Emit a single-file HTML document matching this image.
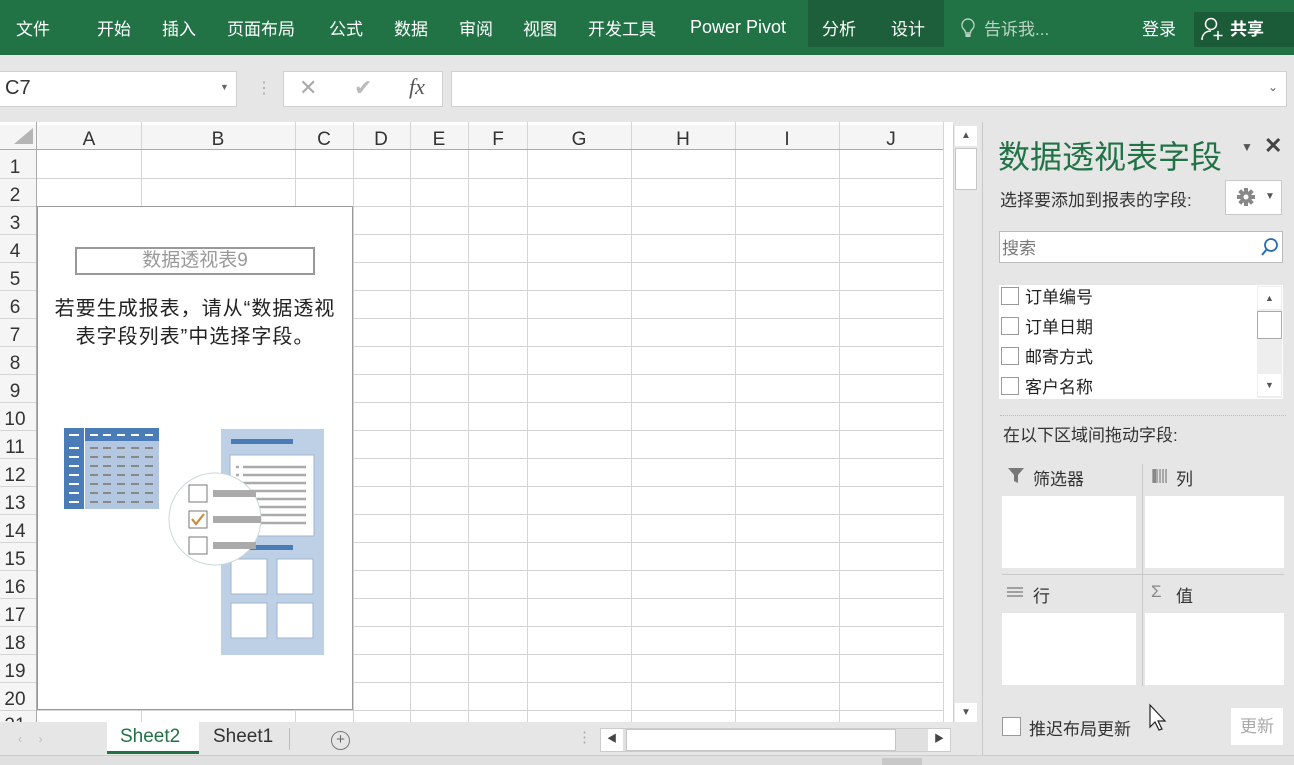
<!DOCTYPE html>
<html><head><meta charset="utf-8"><style>
*{margin:0;padding:0;box-sizing:border-box}
body{width:1294px;height:765px;overflow:hidden;background:#e6e6e6;font-family:"Liberation Sans","Noto Sans CJK SC",sans-serif;position:relative;color:#222}
.a{position:absolute}
.tab{position:absolute;top:15px;color:#fff;font-size:17px;white-space:nowrap}
</style></head><body>
<!-- ribbon -->
<div class="a" style="left:0;top:0;width:1294px;height:55px;background:#217346"></div>
<div class="a" style="left:808px;top:0;width:136px;height:47px;background:#1d5f3a"></div>
<div class="a" style="left:1194px;top:12px;width:100px;height:35px;background:#1b5b37"></div>
<span class="tab" style="left:16px">文件</span>
<span class="tab" style="left:97px">开始</span>
<span class="tab" style="left:162px">插入</span>
<span class="tab" style="left:227px">页面布局</span>
<span class="tab" style="left:329px">公式</span>
<span class="tab" style="left:394px">数据</span>
<span class="tab" style="left:459px">审阅</span>
<span class="tab" style="left:523px">视图</span>
<span class="tab" style="left:588px">开发工具</span>
<span class="tab" style="left:690px;top:17px;font-size:18px">Power Pivot</span>
<span class="tab" style="left:822px">分析</span>
<span class="tab" style="left:891px">设计</span>
<svg class="a" style="left:960px;top:18px" width="16" height="22" viewBox="0 0 16 22"><path d="M8 1a6 6 0 0 0-4 10.5c1 1 1.5 2 1.5 3.5h5c0-1.5.5-2.5 1.5-3.5A6 6 0 0 0 8 1z" fill="none" stroke="#b9d3c2" stroke-width="1.4"/><rect x="5.5" y="16" width="5" height="3" fill="#b9d3c2"/></svg>
<span class="tab" style="left:984px;color:#b9d3c2">告诉我...</span>
<span class="tab" style="left:1142px">登录</span>
<svg class="a" style="left:1200px;top:16px" width="26" height="26" viewBox="0 0 26 26"><circle cx="11" cy="8" r="5.5" fill="none" stroke="#fff" stroke-width="1.5"/><path d="M2 24c0-6 4-9 9-9" fill="none" stroke="#fff" stroke-width="1.5"/><path d="M18 15v9M13.5 19.5h9" stroke="#fff" stroke-width="1.5"/></svg>
<span class="tab" style="left:1230px;font-weight:bold">共享</span>
<!-- formula bar -->
<div class="a" style="left:0;top:71px;width:237px;height:36px;background:#fff;border:1px solid #d0d0d0;border-left:none"></div>
<span class="a" style="left:5px;top:77px;font-size:20px;color:#333">C7</span>
<span class="a" style="left:220px;top:82px;font-size:9px;color:#666">▼</span>
<span class="a" style="left:256px;top:78px;font-size:16px;color:#aaa">⋮</span>
<div class="a" style="left:283px;top:71px;width:160px;height:36px;background:#fff;border:1px solid #d0d0d0"></div>
<span class="a" style="left:299px;top:75px;font-size:22px;color:#aaa">✕</span>
<span class="a" style="left:354px;top:75px;font-size:22px;color:#bbb">✔</span>
<span class="a" style="left:409px;top:74px;font-size:22px;color:#555;font-family:'Liberation Serif',serif;font-style:italic">fx</span>
<div class="a" style="left:451px;top:71px;width:836px;height:36px;background:#fff;border:1px solid #d0d0d0"></div>
<span class="a" style="left:1268px;top:80px;font-size:12px;color:#666">⌄</span>
<!-- grid -->
<svg class="a" style="left:0;top:122px" width="953" height="600">
<rect x="0" y="0" width="953" height="600" fill="#fff"/>
<rect x="0" y="3" width="943" height="25" fill="#f5f5f5"/>
<rect x="0" y="3" width="37" height="597" fill="#f5f5f5"/>
<path d="M33 6L33 22L14 22Z" fill="#b5b5b5"/>
<g stroke="#d4d4d4" stroke-width="1">
<path d="M141.5 0V600M295.5 0V600M353.5 0V600M410.5 0V600M468.5 0V600M527.5 0V600M631.5 0V600M735.5 0V600M839.5 0V600M943.5 0V600"/>
<path d="M0 56.5H943M0 84.5H943M0 112.5H943M0 140.5H943M0 168.5H943M0 196.5H943M0 224.5H943M0 252.5H943M0 280.5H943M0 308.5H943M0 336.5H943M0 364.5H943M0 392.5H943M0 420.5H943M0 448.5H943M0 476.5H943M0 504.5H943M0 532.5H943M0 560.5H943M0 588.5H943"/>
</g>
<path d="M0 27.5H943M36.5 0V600" stroke="#ababab"/>
<g font-size="19" fill="#333" text-anchor="middle" font-family="Liberation Sans">
<text x="89" y="23">A</text><text x="218" y="23">B</text><text x="324" y="23">C</text><text x="381" y="23">D</text><text x="439" y="23">E</text><text x="498" y="23">F</text><text x="579" y="23">G</text><text x="683" y="23">H</text><text x="787" y="23">I</text><text x="891" y="23">J</text>
<text x="15" y="51">1</text><text x="15" y="79">2</text><text x="15" y="107">3</text><text x="15" y="135">4</text><text x="15" y="163">5</text><text x="15" y="191">6</text><text x="15" y="219">7</text><text x="15" y="247">8</text><text x="15" y="275">9</text><text x="15" y="303">10</text><text x="15" y="331">11</text><text x="15" y="359">12</text><text x="15" y="387">13</text><text x="15" y="415">14</text><text x="15" y="443">15</text><text x="15" y="471">16</text><text x="15" y="499">17</text><text x="15" y="527">18</text><text x="15" y="555">19</text><text x="15" y="583">20</text><text x="15" y="609">21</text>
</g>
<rect x="37.5" y="84.5" width="315" height="503" fill="#fff" stroke="#9a9a9a"/>
</svg>
<!-- pivot placeholder -->
<div class="a" style="left:75px;top:247px;width:240px;height:28px;border:2px solid #999;text-align:center;font-size:19px;color:#999;line-height:24px">数据透视表9</div>
<div class="a" style="left:38px;top:295px;width:314px;text-align:center;font-size:20px;letter-spacing:1px;line-height:28px;color:#222">若要生成报表，请从“数据透视<br>表字段列表”中选择字段。</div>
<svg class="a" style="left:60px;top:425px" width="270" height="235" viewBox="60 425 270 235">
<rect x="64" y="428" width="95" height="81" fill="#b4c7e0"/>
<rect x="64" y="428" width="95" height="13" fill="#4a7db8"/>
<rect x="64" y="428" width="20" height="81" fill="#4a7db8"/>
<path d="M84.5 428V509" stroke="#fff"/>
<g stroke="#fff" stroke-width="2"><path d="M69 435h10M90 435h8M103 435h8M117 435h8M131 435h8M145 435h8"/>
<path d="M69 448h10M69 457h10M69 466h10M69 475h10M69 484h10M69 493h10M69 502h10"/></g>
<g stroke="#888" stroke-width="2"><path d="M90 448h8M103 448h8M117 448h8M131 448h8M145 448h8M90 457h8M103 457h8M117 457h8M131 457h8M145 457h8M90 466h8M103 466h8M117 466h8M131 466h8M145 466h8M90 475h8M103 475h8M117 475h8M131 475h8M145 475h8M90 484h8M103 484h8M117 484h8M131 484h8M145 484h8M90 493h8M103 493h8M117 493h8M131 493h8M145 493h8M90 502h8M103 502h8M117 502h8M131 502h8M145 502h8"/></g>
<rect x="221" y="429" width="103" height="226" fill="#bdd0e6"/>
<rect x="231" y="439" width="62" height="5" fill="#4a7db8"/>
<rect x="230" y="455" width="84" height="81" fill="#fff" stroke="#9fb4cc"/>
<g stroke="#aaa" stroke-width="2.5"><path d="M236 467h3M243 467h63M236 475h3M243 475h63M243 483h63M243 491h63M243 499h63M243 507h63M243 515h63M243 523h63"/></g>
<rect x="231" y="545" width="62" height="5" fill="#4a7db8"/>
<rect x="231" y="559" width="36" height="35" fill="#fff" stroke="#9fb4cc"/><rect x="277" y="559" width="36" height="35" fill="#fff" stroke="#9fb4cc"/>
<rect x="231" y="603" width="36" height="35" fill="#fff" stroke="#9fb4cc"/><rect x="277" y="603" width="36" height="35" fill="#fff" stroke="#9fb4cc"/>
<circle cx="215" cy="519" r="46" fill="#fff" stroke="#c9d9d9"/>
<rect x="189" y="485" width="18" height="17" fill="#fff" stroke="#777"/>
<rect x="189" y="511" width="18" height="17" fill="#fff" stroke="#777"/>
<rect x="189" y="537" width="18" height="17" fill="#fff" stroke="#777"/>
<path d="M192 519l4 5 8-10" fill="none" stroke="#c98a3a" stroke-width="2.2"/>
<rect x="213" y="490" width="43" height="7" fill="#aaa"/><rect x="213" y="516" width="48" height="7" fill="#aaa"/><rect x="213" y="542" width="43" height="7" fill="#aaa"/>
</svg>
<!-- vertical scrollbar -->
<div class="a" style="left:953px;top:125px;width:26px;height:598px;background:#e8e8e8;border-left:1px solid #d0d0d0"></div>
<div class="a" style="left:955px;top:126px;width:22px;height:20px;background:#fff;font-size:10px;color:#555;text-align:center;line-height:20px">▲</div>
<div class="a" style="left:955px;top:148px;width:22px;height:42px;background:#fff;border:1px solid #c6c6c6"></div>
<div class="a" style="left:955px;top:703px;width:22px;height:20px;background:#fff;font-size:10px;color:#555;text-align:center;line-height:20px">▼</div>
<!-- sheet tabs -->
<div class="a" style="left:0;top:722px;width:980px;height:33px;background:#e6e6e6"></div>
<span class="a" style="left:18px;top:732px;font-size:12px;color:#bbb">‹&nbsp;&nbsp;&nbsp;&nbsp;&nbsp;›</span>
<div class="a" style="left:107px;top:722px;width:92px;height:32px;background:#fff;border-bottom:3px solid #217346"></div>
<span class="a" style="left:120px;top:726px;font-size:19px;color:#217346">Sheet2</span>
<span class="a" style="left:213px;top:726px;font-size:19px;color:#333">Sheet1</span>
<div class="a" style="left:289px;top:728px;width:1px;height:22px;background:#bbb"></div>
<div class="a" style="left:331px;top:731px;width:19px;height:19px;border:1px solid #777;border-radius:50%;text-align:center;font-size:15px;line-height:16px;color:#666">+</div>
<span class="a" style="left:577px;top:728px;font-size:15px;color:#aaa">⋮</span>
<div class="a" style="left:600px;top:728px;width:351px;height:24px;background:#e0e0e0;border:1px solid #ccc"></div>
<div class="a" style="left:601px;top:729px;width:22px;height:22px;background:#fff;font-size:10px;text-align:center;line-height:22px;color:#444">◀</div>
<div class="a" style="left:626px;top:729px;width:270px;height:22px;background:#fff;border:1px solid #c6c6c6"></div>
<div class="a" style="left:928px;top:729px;width:22px;height:22px;background:#fff;font-size:10px;text-align:center;line-height:22px;color:#444">▶</div>
<div class="a" style="left:0;top:755px;width:1294px;height:10px;background:#e0e0e0;border-top:1px solid #cfcfcf"></div>
<div class="a" style="left:882px;top:758px;width:40px;height:7px;background:#c8c8c8"></div>
<!-- right panel -->
<div class="a" style="left:982px;top:122px;width:1px;height:633px;background:#c8c8c8"></div>
<span class="a" style="left:998px;top:132px;font-size:32px;color:#217346">数据透视表字段</span>
<span class="a" style="left:1241px;top:140px;font-size:12px;color:#555">▼</span>
<span class="a" style="left:1264px;top:133px;font-size:22px;color:#444;font-weight:bold">✕</span>
<span class="a" style="left:1000px;top:186px;font-size:17px;color:#333">选择要添加到报表的字段:</span>
<div class="a" style="left:1225px;top:180px;width:57px;height:35px;background:#fff;border:1px solid #c8c8c8"></div>
<svg class="a" style="left:1236px;top:187px" width="20" height="20" viewBox="0 0 20 20"><g fill="#888"><circle cx="10" cy="10" r="6"/><rect x="8" y="1" width="4" height="18"/><rect x="1" y="8" width="18" height="4"/><rect x="8" y="1" width="4" height="18" transform="rotate(45 10 10)"/><rect x="8" y="1" width="4" height="18" transform="rotate(-45 10 10)"/></g><circle cx="10" cy="10" r="2.5" fill="#fff"/></svg>
<span class="a" style="left:1265px;top:191px;font-size:10px;color:#555">▼</span>
<div class="a" style="left:999px;top:231px;width:284px;height:32px;background:#fff;border:1px solid #bbb"></div>
<span class="a" style="left:1002px;top:234px;font-size:17px;color:#777">搜索</span>
<svg class="a" style="left:1259px;top:236px" width="22" height="22"><circle cx="12" cy="9" r="6" fill="none" stroke="#2b6cb0" stroke-width="1.8"/><path d="M8 13l-5 6" stroke="#2b6cb0" stroke-width="2"/></svg>
<div class="a" style="left:999px;top:285px;width:284px;height:114px;background:#fff"></div>
<div class="a" style="left:1257px;top:286px;width:25px;height:112px;background:#eee"></div>
<div class="a" style="left:1258px;top:287px;width:23px;height:22px;background:#fff;font-size:9px;color:#555;text-align:center;line-height:22px">▲</div>
<div class="a" style="left:1257px;top:311px;width:25px;height:28px;background:#fff;border:1px solid #aaa"></div>
<div class="a" style="left:1258px;top:374px;width:23px;height:22px;background:#fff;font-size:9px;color:#555;text-align:center;line-height:22px">▼</div>
<div class="a" style="left:1001px;top:283px;font-size:17px;line-height:30px;color:#222">
<div><span style="display:inline-block;width:18px;height:18px;border:1px solid #999;vertical-align:-2px;margin-right:6px"></span>订单编号</div>
<div><span style="display:inline-block;width:18px;height:18px;border:1px solid #999;vertical-align:-2px;margin-right:6px"></span>订单日期</div>
<div><span style="display:inline-block;width:18px;height:18px;border:1px solid #999;vertical-align:-2px;margin-right:6px"></span>邮寄方式</div>
<div><span style="display:inline-block;width:18px;height:18px;border:1px solid #999;vertical-align:-2px;margin-right:6px"></span>客户名称</div>
</div>
<div class="a" style="left:1000px;top:415px;width:286px;border-top:1px dotted #bbb"></div>
<span class="a" style="left:1003px;top:421px;font-size:17px;color:#333">在以下区域间拖动字段:</span>
<svg class="a" style="left:1007px;top:466px" width="20" height="20"><path d="M1 2h16l-6 7v8l-4-2V9z" fill="#777"/></svg>
<span class="a" style="left:1033px;top:465px;font-size:17px;color:#333">筛选器</span>
<svg class="a" style="left:1152px;top:468px" width="16" height="16"><path d="M1 1v14M5 1v14M8 1v14M11 1v14M14 1v14" stroke="#888" stroke-width="1.3"/><rect x="1" y="1" width="3" height="14" fill="#888"/></svg>
<span class="a" style="left:1176px;top:465px;font-size:17px;color:#333">列</span>
<div class="a" style="left:1002px;top:496px;width:134px;height:72px;background:#fff"></div>
<div class="a" style="left:1145px;top:496px;width:139px;height:72px;background:#fff"></div>
<div class="a" style="left:1142px;top:464px;width:1px;height:222px;background:#c8c8c8"></div>
<div class="a" style="left:1002px;top:574px;width:282px;height:1px;background:#c8c8c8"></div>
<svg class="a" style="left:1007px;top:586px" width="18" height="14"><path d="M0 2h16M0 6h16M0 10h16" stroke="#888" stroke-width="1.5"/></svg>
<span class="a" style="left:1033px;top:582px;font-size:17px;color:#333">行</span>
<span class="a" style="left:1151px;top:582px;font-size:17px;color:#888">Σ</span>
<span class="a" style="left:1176px;top:582px;font-size:17px;color:#333">值</span>
<div class="a" style="left:1002px;top:613px;width:134px;height:72px;background:#fff"></div>
<div class="a" style="left:1145px;top:613px;width:139px;height:72px;background:#fff"></div>
<div class="a" style="left:1002px;top:717px;width:19px;height:19px;background:#fff;border:1px solid #999"></div>
<span class="a" style="left:1029px;top:715px;font-size:17px;color:#333">推迟布局更新</span>
<svg class="a" style="left:1148px;top:703px" width="20" height="30"><path d="M2 2v22l5-5 4 8 3-1-4-8h7z" fill="#fff" stroke="#222" stroke-width="1.2"/></svg>
<div class="a" style="left:1231px;top:708px;width:52px;height:37px;background:#fff;text-align:center;line-height:37px;font-size:17px;color:#aaa">更新</div>
</body></html>
